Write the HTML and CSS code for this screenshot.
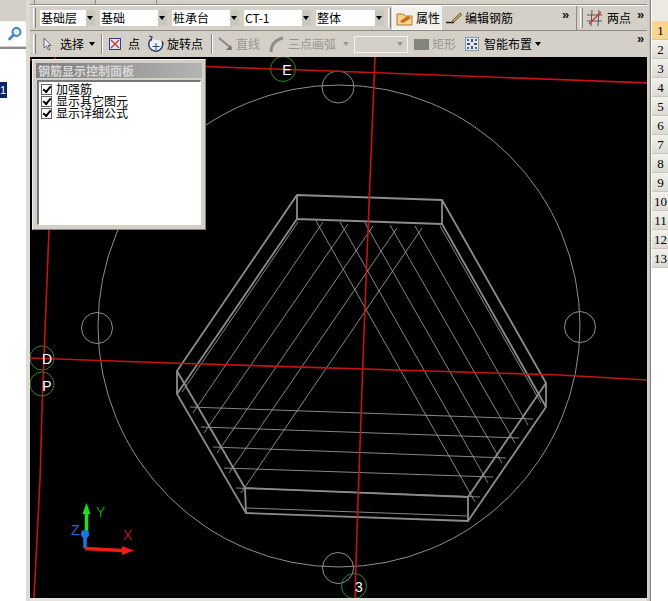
FILE: index.html
```html
<!DOCTYPE html>
<html lang="zh">
<head>
<meta charset="utf-8">
<title>钢筋显示控制面板</title>
<link rel="stylesheet" href="styles.css">
</head>
<body>
<div class="app">
  <aside class="side">
    <div class="side-top"></div>
    <div class="search">
      <svg class="search-icon" width="16" height="16" viewBox="0 0 16 16"><circle cx="9.5" cy="6" r="4" fill="#e6f2fb" stroke="#3f86c4" stroke-width="2"/><path d="M6.5 9 2.5 13" stroke="#3f86c4" stroke-width="2.6" stroke-linecap="round"/></svg>
    </div>
    <div class="side-item">1</div>
  </aside>
  <main class="main">
    <div class="strip"><i></i><i></i><i></i></div>
    <div class="bar bar-a">
      <span class="grip"></span>
      <div class="combo w1"><span>基础层</span><b></b></div>
      <div class="combo w2"><span>基础</span><b></b></div>
      <div class="combo w2"><span>桩承台</span><b></b></div>
      <div class="combo w2"><span>CT-1</span><b></b></div>
      <div class="combo w3"><span>整体</span><b></b></div>
      <span class="grip g-prop"></span>
      <div class="tool active">
        <svg width="18" height="16" viewBox="0 0 18 16"><path d="M1 4h6l2 2h7v9H1z" fill="#f5d68c" stroke="#b5792c"/><path d="M4 11l8-5 3 2-8 5z" fill="#c96a1e"/></svg>
        <span>属性</span>
      </div>
      <div class="tool edit">
        <svg width="17" height="14" viewBox="0 0 17 14"><path d="M0 11.5h8" stroke="#222" stroke-width="1.5"/><path d="M6 10 14 2l2 1.5-8 7.5z" fill="#c8a23c" stroke="#444" stroke-width=".7"/></svg>
        <span>编辑钢筋</span>
      </div>
      <span class="more m1">»</span>
      <span class="divider"></span>
      <span class="grip"></span>
      <div class="tool two">
        <svg width="16" height="16" viewBox="0 0 16 16"><path d="M0 5h15M0 11h15M5 0l-1 16M12 0l-1 16" stroke="#555" fill="none"/><path d="M2 14 14 2" stroke="#c33" stroke-width="1.4"/></svg>
        <span>两点</span>
      </div>
      <span class="more m2">»</span>
    </div>
    <div class="bar bar-b">
      <span class="grip"></span>
      <svg class="i-arrow" width="9" height="14" viewBox="0 0 9 14"><path d="M1 1v10l2.500-2 2 4 1.500-.8-2-3.700h3z" fill="#eee" stroke="#667"/></svg>
      <span class="label l-select">选择</span><span class="caret c-select"></span>
      <span class="sep s1"></span>
      <svg class="i-point" width="12" height="12" viewBox="0 0 12 12"><rect x=".5" y=".5" width="11" height="11" fill="#dfe6f5" stroke="#2c3f8c"/><path d="M2 2l8 8M10 2l-8 8" stroke="#c0392b" stroke-width="1.300"/></svg>
      <span class="label l-point">点</span>
      <svg class="i-rotate" width="18" height="19" viewBox="0 0 18 19"><path d="M15 6A7 7 0 1 1 4 4" fill="#eef3fa" stroke="#27406e" stroke-width="1.500"/><path d="M2 1l3 1-1 4" fill="none" stroke="#27406e" stroke-width="1.200"/><path d="M9 8v7M5.500 11.500h7" stroke="#27406e"/><path d="M15 6l2 3" stroke="#c0392b"/></svg>
      <span class="label l-rotate">旋转点</span>
      <span class="sep s2"></span>
      <svg class="i-line" width="15" height="14" viewBox="0 0 15 14"><path d="M1 1 13 11" stroke="#8c8a84" stroke-width="2"/><path d="M14 13H8l5-5z" fill="#77756f"/></svg>
      <span class="label dis l-line">直线</span>
      <svg class="i-arc" width="17" height="17" viewBox="0 0 17 17"><path d="M3 16C3 9 7 4 15 2" fill="none" stroke="#8f8d87" stroke-width="3"/></svg>
      <span class="label dis l-arc">三点画弧</span><span class="caret dis-c c-arc"></span>
      <div class="dis-box"><b></b></div>
      <span class="rect-i"></span>
      <span class="label dis l-rect">矩形</span>
      <svg class="i-smart" width="14" height="14" viewBox="0 0 14 14"><rect width="14" height="14" fill="#dde6ee" stroke="#456"/><path d="M7 2v3M7 9v3M2 7h3M9 7h3" stroke="#123" stroke-width="1.400"/><circle cx="3" cy="3" r="1" fill="#147"/><circle cx="11" cy="3" r="1" fill="#147"/><circle cx="3" cy="11" r="1" fill="#147"/><circle cx="11" cy="11" r="1" fill="#147"/></svg>
      <span class="label l-smart">智能布置</span><span class="caret c-smart"></span>
      <span class="more m3">»</span>
    </div>
    <div class="canvas">
      <svg class="drawing" width="617" height="541" viewBox="30 57 617 541">
        <g fill="none" stroke="#8e8e8e" stroke-width="1">
          <circle cx="339" cy="326" r="241"/>
          <circle cx="97" cy="328" r="15.500"/>
          <circle cx="580" cy="327" r="15.500"/>
          <circle cx="338" cy="87" r="16"/>
          <circle cx="338" cy="568" r="15.500"/>
        </g>
        <g fill="none" stroke="#a8a8a8" stroke-width=".8">
          <path d="M298 222 182 392M323 222 193 413M348 224 204 433M373 226 217 453M397 228 229 473M422 228 241 493"/>
          <path d="M316 221 475 502M340 222 488 483M365 223 502 463M390 225 515 443M415 226 528 425M440 226 541 403"/>
          <path d="M190 407 533 419M201 427 519 438M213 447 506 458M224 468 493 477M236 488 480 497M247 508 467 516"/>
        </g>
        <g fill="none" stroke="#8c8c8c" stroke-width="1.800">
          <path d="M297 195 442 200 546 383 546 407 468 521 246 513 177 394 177 371Z"/>
          <path d="M297 195V219L177 394M442 200V224L546 407M297 219 442 224"/>
          <path d="M177 371 245 488 468 497 546 383M245 488 246 513M468 497V521"/>
        </g>
        <g fill="none" stroke="#2c8a2c" stroke-width="1">
          <circle cx="283" cy="69" r="12.500"/>
          <circle cx="42" cy="358" r="12"/>
          <circle cx="42" cy="384" r="12"/>
          <circle cx="354" cy="586" r="12.500"/>
        </g>
        <g fill="none" stroke="#c41414" stroke-width="1.600">
          <path d="M30 60 205 66.500 330 71 650 83"/>
          <path d="M30 358 170 363 560 375 647 380"/>
          <path d="M375 57 370 180 365 306 363 360 357 530 355 598"/>
          <path d="M55 57 49 230 45 330 42 410 40 480 34 598"/>
        </g>
        <g class="grid-label">
          <text x="287" y="75">E</text>
          <text x="47" y="364">D</text>
          <text x="47" y="391">P</text>
          <text x="359" y="592">3</text>
        </g>
        <path d="M85 534V548" stroke="#1c78e0" stroke-width="3.500"/>
        <path d="M86.500 534V513" stroke="#1fe01f" stroke-width="3.500"/>
        <path d="M86.500 503 82.500 514H90.500Z" fill="#1fe01f"/>
        <circle cx="85" cy="534" r="4" fill="#1c78e0"/>
        <path d="M85 548.500 122 550.500" stroke="#ee1c1c" stroke-width="3.500"/>
        <path d="M134 550.500 122 546V555Z" fill="#ee1c1c"/>
        <text class="axis ay" x="96" y="517">Y</text>
        <text class="axis az" x="71" y="535">Z</text>
        <text class="axis ax" x="123" y="540">X</text>
      </svg>
      <section class="panel">
        <h2 class="panel-title">钢筋显示控制面板</h2>
        <div class="panel-body">
          <label class="check"><input type="checkbox" checked><span>加强筋</span></label>
          <label class="check"><input type="checkbox" checked><span>显示其它图元</span></label>
          <label class="check"><input type="checkbox" checked><span>显示详细公式</span></label>
        </div>
      </section>
    </div>
    <div class="foot"></div>
  </main>
  <nav class="tabs">
    <div class="tabs-top"></div>
    <div class="tab on">1</div><div class="tab">2</div><div class="tab">3</div><div class="tab">4</div><div class="tab">5</div><div class="tab">6</div><div class="tab">7</div><div class="tab">8</div><div class="tab">9</div><div class="tab">10</div><div class="tab">11</div><div class="tab">12</div><div class="tab">13</div>
  </nav>
</div>
</body>
</html>
```
FILE: styles.css
```css
* { box-sizing: border-box; }
html, body { margin: 0; padding: 0; }
body { width: 668px; height: 601px; overflow: hidden; background: #fff; font: 12px/14px "Noto Sans CJK SC", "Liberation Sans", sans-serif; color: #000; }
.app { display: flex; width: 668px; height: 601px; }

.side { width: 26px; flex: none; background: #fff; }
.side-top { height: 21px; background: #d4d0c8; }
.search { height: 28px; border-top: 1px solid #f4f3ee; border-bottom: 2px solid #8d8b85; background: #fff; padding: 4px 0 0 7px; box-shadow: inset 0 -1px 0 #d4d0c8; }
.search-icon { display: block; }
.side-item { width: 7px; height: 16px; margin-top: 33px; background: #0a246a; color: #fff; font: 11px/16px "Liberation Sans", sans-serif; overflow: hidden; }

.main { width: 624px; flex: none; background: #d4d0c8; border-left: 4px solid #dedbd4; border-right: 3px solid #d4d0c8; display: flex; flex-direction: column; }
.strip { height: 5px; display: flex; border-bottom: 1px solid #8d8b85; padding-left: 4px; }
.strip i { width: 1px; height: 4px; background: #8d8b85; margin-right: 60px; }
.bar { display: flex; align-items: center; flex: none; width: 617px; position: relative; }
.bar-a { height: 26px; border-bottom: 1px solid #8d8b85; border-top: 1px solid #fff; }
.bar-b { height: 26px; border-bottom: 0; }
.grip { width: 3px; height: 20px; margin-left: 3px; border-left: 1px solid #fff; border-right: 1px solid #85837d; flex: none; }

.combo { height: 16px; background: #fff; display: flex; justify-content: space-between; padding-left: 1px; margin-right: 5px; flex: none; }
.combo span { line-height: 16px; }
.combo b { width: 9px; background: #c9c6be; position: relative; }
.combo b::after { content: ""; position: absolute; left: 1px; top: 6px; border: 3.5px solid transparent; border-top: 4px solid #000; border-bottom: 0; }
.w1 { width: 55px; margin-left: 4px; }
.w2 { width: 67px; }
.w3 { width: 68px; margin-right: 0; }
.g-prop { margin-left: 4px; }

.tool { display: flex; align-items: center; gap: 3px; flex: none; }
.active { width: 50px; height: 24px; margin-left: 1px; padding-left: 4px; gap: 2px; background: #f1f0ec; outline: 1px dotted #fff; outline-offset: -1px; }
.edit { margin-left: 4px; width: 70px; gap: 2px; }
.two { margin-left: 4px; gap: 4px; }
.more { color: #111; font: bold 13px/10px "Liberation Sans", sans-serif; position: absolute; top: 4px; }
.m1 { left: 532px; }
.m2 { left: 607px; }
.m3 { left: 607px; top: 3px; }
.divider { width: 1px; height: 25px; background: #8d8b85; margin-left: 60px; flex: none; }

.label { flex: none; }
.dis { color: #97958f; }
.sep { width: 1px; height: 20px; background: #85837d; flex: none; box-shadow: 1px 0 0 #fff; }
.caret { width: 0; height: 0; border: 3.5px solid transparent; border-top: 4px solid #000; border-bottom: 0; flex: none; }
.dis-c { border-top-color: #97958f; }
.i-arrow { margin-left: 7px; }
.l-select { margin-left: 8px; }
.c-select { margin-left: 5px; }
.s1 { margin-left: 6px; }
.i-point { margin-left: 7px; }
.l-point { margin-left: 7px; }
.i-rotate { margin-left: 7px; }
.l-rotate { margin-left: 2px; }
.s2 { margin-left: 8px; }
.i-line { margin-left: 6px; }
.l-line { margin-left: 3px; }
.i-arc { margin-left: 8px; }
.l-arc { margin-left: 3px; }
.c-arc { margin-left: 7px; }
.dis-box { width: 54px; height: 17px; margin-left: 5px; border: 1px solid #f4f3ee; position: relative; flex: none; }
.dis-box b { position: absolute; right: 4px; top: 5px; border: 3.5px solid transparent; border-top: 4px solid #97958f; border-bottom: 0; }
.rect-i { width: 15px; height: 11px; background: #85837d; margin-left: 6px; flex: none; }
.l-rect { margin-left: 3px; }
.i-smart { margin-left: 9px; }
.l-smart { margin-left: 5px; }
.c-smart { margin-left: 3px; }

.canvas { position: relative; flex: none; width: 617px; height: 541px; background: #000; overflow: hidden; }
.drawing { display: block; }
.grid-label text { fill: #fff; font: 14px "Liberation Sans", sans-serif; text-anchor: middle; }
.axis { font: 14px "Liberation Sans", sans-serif; }
.ay { fill: #1c9a1c; }
.az { fill: #1c6cd0; }
.ax { fill: #b01616; }
.foot { flex: 1; background: #e6e4de; }

.panel { position: absolute; left: 2px; top: 2px; width: 174px; height: 171px; background: #d4d0c8; border: 1px solid #85837d; border-top-color: #f0efea; border-left-color: #f0efea; padding: 3px; }
.panel-title { margin: 0; height: 15px; padding-left: 2px; background: linear-gradient(90deg, #7e7e7e, #b4b4b4); color: #d6d6d6; font: bold 12px/15px "Noto Sans CJK SC", sans-serif; }
.panel-body { margin: 2px 1px 0; height: 145px; background: #fff; border: 1px solid #fff; border-top: 2px solid #777; border-left: 2px solid #777; padding: 1px 0 0 2px; }
.check { display: flex; align-items: center; height: 12px; gap: 4px; font-size: 12px; line-height: 12px; }
.check span { display: block; height: 12px; }
.check input { appearance: none; width: 11px; height: 11px; margin: 0; border: 1px solid #666; background: #fff; position: relative; flex: none; }
.check input::after { content: ""; position: absolute; left: 1px; top: 1px; width: 6px; height: 3px; border-left: 2px solid #000; border-bottom: 2px solid #000; transform: rotate(-50deg); }

.tabs { flex: 1; background: #fff; border-left: 1px solid #85837d; box-shadow: -1px 0 0 #c4c1b9; padding-left: 1px; }
.tabs-top { height: 21px; background: #ece9e2; }
.tab { height: 19px; font: 13px/19px "Liberation Serif", serif; text-align: center; background: linear-gradient(180deg, #f2f1ec, #dcdad3); border-bottom: 1px solid #c8c5bd; padding-left: 1px; }
.tab.on { background: #fbd58e; }
```
